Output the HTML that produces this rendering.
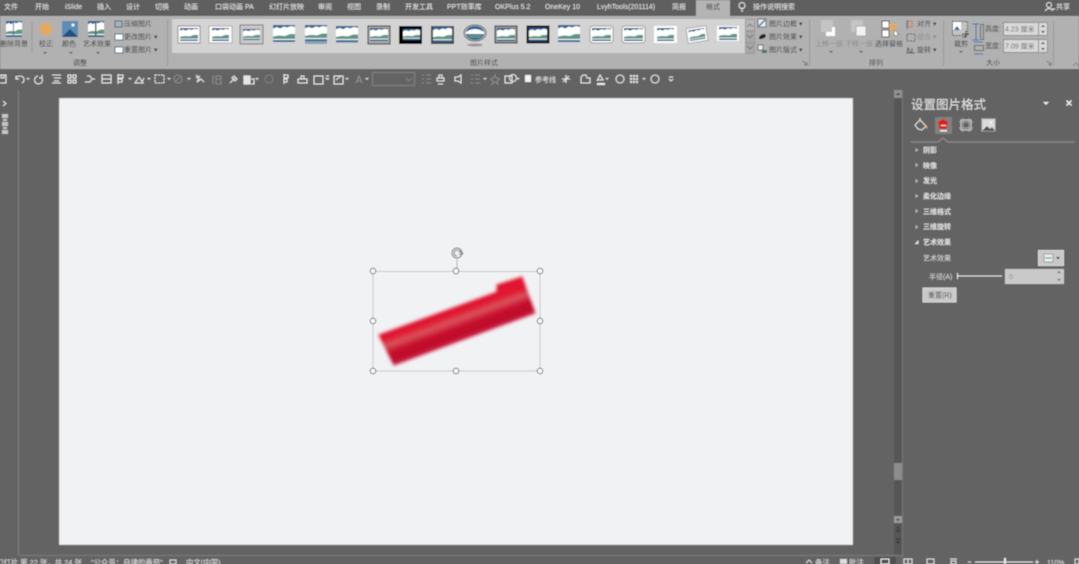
<!DOCTYPE html>
<html lang="zh"><head><meta charset="utf-8"><title>PowerPoint</title>
<style>
html,body{margin:0;padding:0;width:1079px;height:564px;overflow:hidden;background:#646464}
svg{display:block;position:absolute;left:0;top:0}
text{font-family:"Liberation Sans","Noto Sans CJK SC",sans-serif;font-size:7px}
.t text{fill:#ececec}
.r text{fill:#3a3a3a}
.d text{fill:#8c8c8c}
.p text{fill:#e4e4e4;font-weight:700}
.s text{fill:#e2e2e2;font-size:7.4px}
</style></head><body>
<svg width="1079" height="564" viewBox="0 0 1079 564" xmlns="http://www.w3.org/2000/svg">
<defs>
<symbol id="p" viewBox="0 0 22 17" preserveAspectRatio="none">
<rect width="22" height="17" fill="#fff"/>
<rect width="22" height="4" fill="#2d6496"/>
<path d="M0 3.500 4 2 7 3.500 11 1.500 14 2.500 18 1 22 2V11H0Z" fill="#fff"/>
<path d="M0 11.500 6 10.500 12 11 17 9 22 9V14H0Z" fill="#5f9582"/>
<rect y="14" width="22" height="1" fill="#fff"/>
<rect y="15" width="22" height="2" fill="#2d6496"/>
</symbol>
<linearGradient id="red" gradientUnits="userSpaceOnUse" x1="376.3" y1="330.3" x2="389.4" y2="366">
<stop offset="0" stop-color="#e2142f"/><stop offset=".3" stop-color="#e01a32"/>
<stop offset=".48" stop-color="#d9535c"/><stop offset=".66" stop-color="#c9122f"/>
<stop offset=".86" stop-color="#bc0a2a"/><stop offset="1" stop-color="#cc2040"/>
</linearGradient>
<filter id="b1" x="-10%" y="-10%" width="120%" height="120%"><feGaussianBlur stdDeviation="1.700"/></filter>
<filter id="b0" x="0" y="0" width="100%" height="100%"><feGaussianBlur stdDeviation="0.5"/></filter>
</defs>
<g filter="url(#b0)">
<rect width="1079" height="564" fill="#646464"/>
<!-- tab bar -->
<rect width="1079" height="16" fill="#5e5e5e"/>
<rect x="696" y="0" width="34" height="16" fill="#b4b4b4"/>
<g class="t">
<text x="4" y="9">文件</text><text x="35" y="9">开始</text><text x="65" y="9">iSlide</text>
<text x="97" y="9">插入</text><text x="126" y="9">设计</text><text x="155" y="9">切换</text>
<text x="184" y="9">动画</text><text x="215" y="9">口袋动画 PA</text><text x="269" y="9">幻灯片放映</text>
<text x="318" y="9">审阅</text><text x="347" y="9">视图</text><text x="376" y="9">录制</text>
<text x="405" y="9">开发工具</text><text x="447" y="9">PPT效率库</text><text x="495" y="9">OKPlus 5.2</text>
<text x="545" y="9">OneKey 10</text><text x="597" y="9">LvyhTools(201114)</text><text x="672" y="9">简报</text>
<text x="753" y="9">操作说明搜索</text><text x="1056" y="9">共享</text>
</g>
<text x="706" y="9" fill="#333">格式</text>
<g fill="none" stroke="#e6e6e6">
<circle cx="742" cy="5.500" r="3"/><path d="M741 9h2M741 11h2"/>
<circle cx="1049" cy="5" r="2.500"/><path d="M1045 11q4-5 8 0M1052 9h3"/>
</g>
<!-- ribbon -->
<rect y="16" width="1079" height="53" fill="#b1b1b1"/>
<rect x="172" y="19" width="573" height="34" fill="#d3d3d3"/>
<g stroke="#9a9a9a" fill="none">
<path d="M32 22V52M167.500 20V66M809.500 20V66M943.500 20V66M1053.500 20V66"/>
<rect x="745.500" y="19.500" width="9" height="11" fill="#b8b8b8"/>
<rect x="745.500" y="31.500" width="9" height="11" fill="#a8a8a8"/>
<rect x="745.500" y="43.500" width="9" height="10" fill="#a8a8a8"/>
<path d="M747 27l3-3 3 3M747 35l3 3 3-3M747 46l3 3 3-3" stroke="#777"/>
</g>
<!-- adjust group -->
<use href="#p" x="6" y="21" width="16" height="16"/><rect x="13" y="21" width="1" height="16" fill="#4a6a80"/>
<rect x="62" y="21" width="16" height="16" fill="#5d8db5"/><path d="M62 37 70 29 78 37Z" fill="#234f7e"/><circle cx="73" cy="25" r="1.500" fill="#fff"/>
<use href="#p" x="88" y="21" width="16" height="16"/><rect x="95" y="21" width="1.500" height="16" fill="#555"/>
<g fill="#e8a85a"><circle cx="46" cy="29" r="5.500"/></g>
<path d="M46 20v3M46 35v3M37 29h3M52 29h3M40 23l2 2M50 33l2 2M40 35l2-2M50 25l2-2" stroke="#e8a85a"/>
<g fill="none" stroke="#3a6a90">
<rect x="115" y="21" width="7" height="6"/><rect x="115" y="34" width="8" height="6" fill="#fff"/><rect x="115" y="47" width="8" height="6" fill="#fff"/>
</g>
<g class="r">
<text x="0" y="46">删除背景</text><text x="39" y="46">校正</text><text x="62" y="46">颜色</text><text x="83" y="46">艺术效果</text>
<text x="124" y="26">压缩图片</text><text x="124" y="39">更改图片 ▾</text><text x="124" y="52">重置图片 ▾</text>
<text x="73" y="65">调整</text><text x="470" y="65">图片样式</text><text x="869" y="65">排列</text><text x="986" y="65">大小</text>
<text x="769" y="26">图片边框 ▾</text><text x="769" y="39">图片效果 ▾</text><text x="769" y="52">图片版式 ▾</text>
<text x="875" y="46">选择窗格</text><text x="917" y="26">对齐 ▾</text><text x="917" y="52">旋转 ▾</text>
<text x="954" y="46">裁剪</text><text x="985" y="31">高度:</text><text x="985" y="48">宽度:</text>
</g>
<g class="d"><text x="815" y="46">上移一层</text><text x="845" y="46">下移一层</text><text x="917" y="39">组合 ▾</text></g>
<g fill="#555"><path d="M43 52l2 2 2-2zM69 52l2 2 2-2zM96 52l2 2 2-2zM829 51l2 2 2-2zM859 51l2 2 2-2zM959 51l2 2 2-2z"/></g>
<!-- gallery thumbs -->
<rect x="178" y="26" width="22" height="17" fill="#fff" stroke="#888"/>
<use href="#p" x="180" y="28" width="18" height="13"/>
<rect x="209" y="26" width="23" height="17" fill="#fff" stroke="#aaa"/><use href="#p" x="212" y="28" width="17" height="13"/>
<rect x="240" y="25" width="23" height="19" fill="#c8c8c8" stroke="#777"/><use href="#p" x="243" y="29" width="17" height="11"/>
<use href="#p" x="273" y="25" width="22" height="17"/>
<use href="#p" x="305" y="25" width="22" height="16"/><rect x="305" y="41" width="22" height="3" fill="#8aa0b2"/>
<use href="#p" x="336" y="26" width="22" height="16"/><rect x="336" y="42" width="22" height="1" fill="#a0b0bc"/>
<rect x="368" y="26" width="22" height="18" fill="#aaa" stroke="#000"/><use href="#p" x="370" y="28" width="18" height="13"/>
<rect x="399" y="26" width="23" height="18" fill="#000"/><use href="#p" x="403" y="29" width="17" height="11"/>
<rect x="431" y="26" width="23" height="18" fill="#444"/><use href="#p" x="433" y="27" width="19" height="15"/>
<ellipse cx="475" cy="33" rx="11" ry="8" fill="#d8d8d8" stroke="#555"/><ellipse cx="475" cy="33" rx="9.500" ry="7" fill="#2d6496"/><path d="M466 32q9-6 18 0v2H466Z" fill="#fff"/><path d="M467 35h16l-3 3h-10Z" fill="#5f9582"/><ellipse cx="475" cy="45" rx="8" ry="1.500" fill="#999"/>
<rect x="495" y="26" width="22" height="17" fill="#999" stroke="#000"/><use href="#p" x="497" y="28" width="18" height="13"/>
<rect x="527" y="26" width="22" height="17" fill="#222" stroke="#000"/><use href="#p" x="529" y="28" width="18" height="13"/>
<use href="#p" x="558" y="25" width="22" height="17"/>
<rect x="590" y="26" width="23" height="17" rx="3" fill="#fff" stroke="#999"/><use href="#p" x="592" y="28" width="19" height="13"/>
<rect x="622" y="26" width="23" height="17" rx="3" fill="#fff" stroke="#999"/><use href="#p" x="624" y="28" width="19" height="13"/>
<rect x="654" y="26" width="23" height="17" fill="#fff"/><use href="#p" x="657" y="28" width="17" height="13"/>
<g transform="rotate(-9 697 34)"><rect x="687" y="27" width="20" height="15" fill="#fff" stroke="#aaa"/><use href="#p" x="689" y="29" width="16" height="11"/></g>
<rect x="717" y="26" width="22" height="15" fill="#fff"/><use href="#p" x="719" y="27" width="18" height="13"/>
<!-- picture style side icons -->
<rect x="758" y="19" width="8" height="8" fill="#eee" stroke="#666"/><path d="M759 26l6-6" stroke="#2a6fb0" stroke-width="1.500"/>
<path d="M759 38q1-4 6-4l1 2q-1 3-7 3z" fill="#222"/>
<rect x="758" y="45" width="5" height="5" fill="#eee" stroke="#666"/><rect x="762" y="50" width="5" height="3" fill="#3a7a70"/>
<!-- arrange -->
<rect x="821" y="20" width="12" height="12" fill="#c4c4c4"/><rect x="826" y="27" width="9" height="9" fill="#fff"/><rect x="826" y="27" width="6" height="5" fill="#c4c4c4"/>
<rect x="851" y="20" width="12" height="12" fill="#c4c4c4"/><rect x="856" y="26" width="10" height="10" fill="#f2f2f2" stroke="#aaa"/>
<rect x="882" y="21" width="7" height="7" fill="#fff" stroke="#444"/><rect x="882" y="30" width="7" height="7" fill="#fff" stroke="#444"/>
<rect x="889" y="24" width="8" height="3" fill="#e8a85a"/><rect x="891" y="27" width="4" height="6" fill="#e8a85a"/><path d="M894 30v6l2-1 1 2 1-1-1-2h2z" fill="#fff" stroke="#444" stroke-width=".5"/>
<g stroke="#555" fill="none"><rect x="908" y="21" width="4" height="6" stroke="#c87a30"/><path d="M907 20v9" stroke="#2a6fb0"/><rect x="907" y="34" width="8" height="7" stroke-dasharray="2 1"/><path d="M908 48l3 5h-4zM912 48v5h3"/></g>
<!-- size -->
<rect x="952.500" y="21.500" width="15" height="14" fill="#c2c2c2" stroke="#444" stroke-dasharray="2 1"/>
<rect x="953" y="22" width="8" height="8" fill="#fff"/><path d="M954 30l3-4 3 4z" fill="#2d6496"/>
<path d="M966 30v7h-3M962 34h7" stroke="#222" fill="none"/>
<path d="M976 24v16M972 24h7M972 40h7" stroke="#2a6fb0" fill="none"/><rect x="980.500" y="24.500" width="3" height="15" fill="none" stroke="#666"/>
<path d="M974 42h9M974 54h9" stroke="#2a6fb0"/><rect x="974.500" y="45.500" width="9" height="5" fill="none" stroke="#666"/>
<g fill="#d9d9d9" stroke="#8e8e8e"><rect x="1003.500" y="22.500" width="44" height="13"/><rect x="1003.500" y="39.500" width="44" height="13"/><path d="M1038.500 22.500V35.500M1038.500 39.500V52.500"/></g>
<g fill="#666"><text x="1005" y="31.500">4.23 厘米</text><text x="1005" y="48.500">7.09 厘米</text></g>
<path d="M1041 27l2-2 2 2zM1041 31l2 2 2-2zM1041 44l2-2 2 2zM1041 48l2 2 2-2z" fill="#333"/>
<path d="M1073 66l3-3 3 3" stroke="#888" fill="none"/>
<path d="M804 65h3v-3M1048 65h3v-3M806 64l-3-3M1050 64l-3-3" stroke="#777" fill="none"/>
<!-- toolbar -->
<rect y="69" width="1079" height="21" fill="#636363"/>
<g fill="none" stroke="#e6e6e6" stroke-width="1.100">
<path d="M0 75h6v8H0M1 75v3h3V75"/>
<path d="M16 79q0-3 4-3 4 0 4 4 0 2-2 3M16 76v3h3"/>
<path d="M38 76a4 4 0 1 0 4 2M42 75v3h-3"/>
<path d="M52 75h9M54 78h7M54 81h5M52 83h9"/>
<rect x="68" y="75" width="3" height="3"/><rect x="73" y="75" width="3" height="3"/><rect x="68" y="80" width="3" height="3"/><rect x="73" y="80" width="3" height="3"/>
<path d="M85 82h5l2-3-2-3h-3M92 79h3"/>
<rect x="102" y="75" width="9" height="8"/><path d="M102 79h9"/>
<path d="M118 74v10M118 75h5v3h-5M118 79h4v3h-4"/>
<path d="M135 83l4-6 4 6ZM144 78l-2 4"/>
<rect x="155" y="75" width="9" height="8" stroke-dasharray="2 1"/>
<circle cx="178" cy="79" r="4" stroke="#8a8a8a"/><path d="M175 82l6-6" stroke="#8a8a8a"/>
<path d="M196 75l3 3-2 4 4-3 3 3M196 78l4-2"/>
<path d="M213 75v9M216 76h5v8h-5ZM216 79h5" stroke="#8a8a8a"/>
<path d="M230 83l5-5M234 76l3 3-2 2-3-3Z"/>
<rect x="244" y="76" width="6" height="8" fill="#e6e6e6"/><path d="M251 79h3v5h-3"/>
<circle cx="269" cy="79" r="4" stroke="#808080"/>
<path d="M284 74v10M284 75h4v3h-4M284 79h3v3h-3"/>
<path d="M298 83h9v-4h-9ZM301 79v-3h3v3"/>
<rect x="314" y="76" width="9" height="8"/><path d="M326 76h3M327 79h2"/>
<rect x="334" y="76" width="9" height="8"/><path d="M336 80l5-4"/>
<path d="M356 83l3-7 3 7M357 81h4" stroke="#909090"/>
<rect x="372.500" y="72.500" width="42" height="13" stroke="#828282"/><path d="M406 78l3 3 3-3" stroke="#828282"/>
<path d="M422 75h2M422 79h2M422 83h2M426 75h5M426 79h5M426 83h5" stroke="#8a8a8a"/>
<path d="M439 78v-3h3v3M437 78h7v3h-7ZM438 84h5"/>
<path d="M455 77h3l3-2v8l-3-2h-3Z"/>
<path d="M471 75h2M471 79h2M471 83h2M475 75h5M475 79h5M475 83h5" stroke="#8a8a8a"/>
<path d="M495 75l1.500 3 3 1-2.500 2 1 3-3-2-3 2 1-3-2.500-2 3-1Z" stroke="#8a8a8a"/>
<rect x="505" y="76" width="7" height="7"/><circle cx="513" cy="78" r="3.500"/>
<path d="M566 75v8M562 79h8M563 82l6-6"/>
<path d="M581 83v-6l2-2h3l1 3h3v5Z"/>
<path d="M597 81l3-6 3 5h-6"/>
<circle cx="620" cy="79" r="4"/>
<circle cx="655" cy="79" r="4"/><path d="M669 77h4M669 79l2 2 2-2"/>
</g>
<path d="M26 78h4l-2 2zM128 78h4l-2 2zM147 78h4l-2 2zM167 78h4l-2 2zM187 78h4l-2 2zM255 78h4l-2 2zM325 78h4l-2 2zM345 78h4l-2 2zM365 78h4l-2 2zM483 78h4l-2 2zM516 78h4l-2 2zM605 78h4l-2 2zM642 78h4l-2 2z" fill="#dcdcdc"/>
<rect x="597" y="83" width="8" height="2" fill="#eee"/>
<g fill="#e6e6e6"><rect x="630" y="75" width="2" height="2"/><rect x="633" y="75" width="2" height="2"/><rect x="636" y="75" width="2" height="2"/><rect x="630" y="78" width="2" height="2"/><rect x="633" y="78" width="2" height="2"/><rect x="636" y="78" width="2" height="2"/><rect x="630" y="81" width="2" height="2"/><rect x="633" y="81" width="2" height="2"/><rect x="636" y="81" width="2" height="2"/></g>
<rect x="525" y="75" width="6" height="7" fill="#f4f4f4"/>
<text x="535" y="82" fill="#ececec">参考线</text>
<!-- canvas -->
<rect x="18" y="90" width="1" height="465" fill="#808080"/>
<path d="M3 101l3 2.500-3 2.500" fill="none" stroke="#eee"/>
<g fill="#c4c4c4"><rect x="2" y="114" width="6" height="4"/><rect x="3" y="119" width="4" height="2"/><rect x="2" y="122" width="6" height="4"/><rect x="3" y="127" width="4" height="2"/><rect x="2" y="130" width="6" height="4"/></g>
<rect x="59" y="98" width="794" height="447" fill="#f1f2f4"/>
<rect x="59" y="98" width="794" height="447" fill="none" stroke="#8a8a8a" stroke-width=".5"/>
<!-- scrollbar -->
<rect x="894" y="90" width="8" height="465" fill="#565656"/>
<rect x="902" y="90" width="1" height="474" fill="#777"/>
<rect x="894" y="90" width="8" height="8" fill="#8f8f8f"/><path d="M896 95l2-2 2 2z" fill="#222"/>
<rect x="894" y="463" width="8" height="17" fill="#8c8c8c"/>
<rect x="894" y="516" width="8" height="7" fill="#9a9a9a"/><path d="M896 519l2 2 2-2z" fill="#222"/>
<path d="M896 529l2-2 2 2M896 532l2-2 2 2M896 538l2 2 2-2M896 541l2 2 2-2" stroke="#2c2c2c" fill="none" stroke-width=".8"/>
<!-- shape -->
<path d="M379 335 497 292V285L522 277 535 313 394 365Z" fill="url(#red)" stroke="url(#red)" stroke-width="1" stroke-linejoin="round" filter="url(#b1)"/>
<g fill="none" stroke="#c4c6c8"><rect x="373" y="271.500" width="167" height="99.500"/></g>
<path d="M457 259V271" stroke="#b0b0b0"/>
<g fill="#fafafa" stroke="#555" stroke-width=".8">
<circle cx="373" cy="271" r="2.800"/><circle cx="456" cy="271" r="2.800"/><circle cx="540" cy="271" r="2.800"/>
<circle cx="373" cy="321" r="2.800"/><circle cx="540" cy="321" r="2.800"/>
<circle cx="373" cy="371" r="2.800"/><circle cx="456" cy="371" r="2.800"/><circle cx="540" cy="371" r="2.800"/>
</g>
<g fill="none" stroke="#777"><circle cx="457" cy="253" r="5"/><path d="M460 253a3 3 0 1 0-3 3"/><path d="M460 251l3 2.500-4 1"/></g>
<!-- panel -->
<text x="911" y="109" style="font-size:12.500px" fill="#e8e8e8">设置图片格式</text>
<path d="M1043 102h6l-3 3z" fill="#eee"/>
<path d="M1066.500 100.500l5 5M1071.500 100.500l-5 5" stroke="#eee" stroke-width="1.500"/>
<rect x="935" y="117" width="17" height="17" fill="#808080"/>
<g fill="none" stroke="#e6e6e6">
<path d="M915 125l5-5 6 6-4 4-4-1Z"/><path d="M920 120v-2"/>
<rect x="961" y="120" width="10" height="10" stroke="#cfcfcf"/><path d="M959 122h14M959 128h14M963 118v14M969 118v14" stroke="#bdbdbd" stroke-width=".7"/>
</g>
<path d="M926 125q2 2 1 4-2-1-1-4z" fill="#e8a85a"/>
<path d="M943 119l5 3-1.500 7h-7l-1.500-7z" fill="#e01c1c"/><rect x="940" y="130" width="7" height="1.500" fill="#f0f0f0"/><rect x="941" y="125" width="5" height="1" fill="#f4f4f4"/>
<rect x="982" y="119" width="13" height="12" fill="#dcdcdc" stroke="#bbb"/><path d="M982 131l5-5 3 3 2-2 3 4z" fill="#555"/><circle cx="991" cy="122.500" r="1" fill="#fff"/>
<path d="M911 142H938L943 138 948 142H1075" fill="none" stroke="#8c8c8c" stroke-width="1.200"/>
<path d="M915.500 148l3 2-3 2zM915.500 163l3 2-3 2zM915.500 179l3 2-3 2zM915.500 194l3 2-3 2zM915.500 209l3 2-3 2zM915.500 225l3 2-3 2z" fill="#b8b8b8"/>
<path d="M918.500 240v4h-4z" fill="#e0e0e0"/>
<g class="p">
<text x="923" y="152.500">阴影</text><text x="923" y="168">映像</text><text x="923" y="183">发光</text>
<text x="923" y="198.500">柔化边缘</text><text x="923" y="214">三维格式</text><text x="923" y="229">三维旋转</text><text x="923" y="244.500">艺术效果</text>
</g>
<text x="923" y="260.500" fill="#dcdcdc">艺术效果</text>
<text x="929" y="279" fill="#dcdcdc">半径(A)</text>
<rect x="1038.500" y="250.500" width="25" height="15" fill="#c9c9c9" stroke="#dadada"/>
<rect x="1044" y="254" width="9" height="8" fill="#e8eef0" stroke="#777" stroke-width=".6"/><path d="M1045 258h7" stroke="#4a8a80"/>
<path d="M1056 257h4l-2 2.500z" fill="#333"/>
<path d="M957.500 273v6M958 276h44" stroke="#e8e8e8"/>
<rect x="1005" y="269" width="59" height="15" fill="#c9c9c9"/>
<text x="1009" y="279" fill="#888">0</text>
<path d="M1057 273l2-2 2 2zM1057 279l2 2 2-2z" fill="#666"/>
<rect x="923" y="288" width="33" height="14" fill="#c9c9c9" stroke="#d8d8d8"/>
<text x="928" y="297.500" fill="#444">重置(R)</text>
<!-- status bar -->
<rect x="19" y="555" width="883" height="1" fill="#7c7c7c"/>
<g class="s">
<text x="-4" y="565">幻灯片 第 22 张，共 24 张</text>
<text x="91" y="565">"公众号：自律的番茄"</text>
<text x="186" y="565">中文(中国)</text>
<text x="815" y="565">备注</text><text x="849" y="565">批注</text>
<text x="1047" y="565" style="font-size:7px">110%</text>
</g>
<rect x="170" y="560" width="6" height="4" fill="none" stroke="#ddd"/>
<path d="M806 563l3-3 3 3" stroke="#ddd" fill="none"/>
<rect x="840" y="559" width="7" height="5" fill="#ddd"/>
<rect x="874" y="557" width="22" height="7" fill="#505050"/>
<rect x="881" y="559" width="8" height="5" fill="none" stroke="#eee"/>
<path d="M904 559h8v5h-8ZM908 559v5" fill="none" stroke="#ddd"/>
<path d="M927 559h7v5h-7Z" fill="none" stroke="#ddd"/><path d="M950 559h7M951 561h5v3h-5Z" fill="none" stroke="#ddd"/>
<path d="M968 562h3" stroke="#ddd"/><path d="M975 562h58" stroke="#e4e4e4" stroke-width="1"/>
<rect x="1004" y="558" width="2" height="6" fill="#eee"/>
<path d="M1035 562h4M1037 560v4" stroke="#ddd"/>
<rect x="1075" y="559" width="4" height="5" fill="none" stroke="#ddd"/>
</g>
</svg>
</body></html>
